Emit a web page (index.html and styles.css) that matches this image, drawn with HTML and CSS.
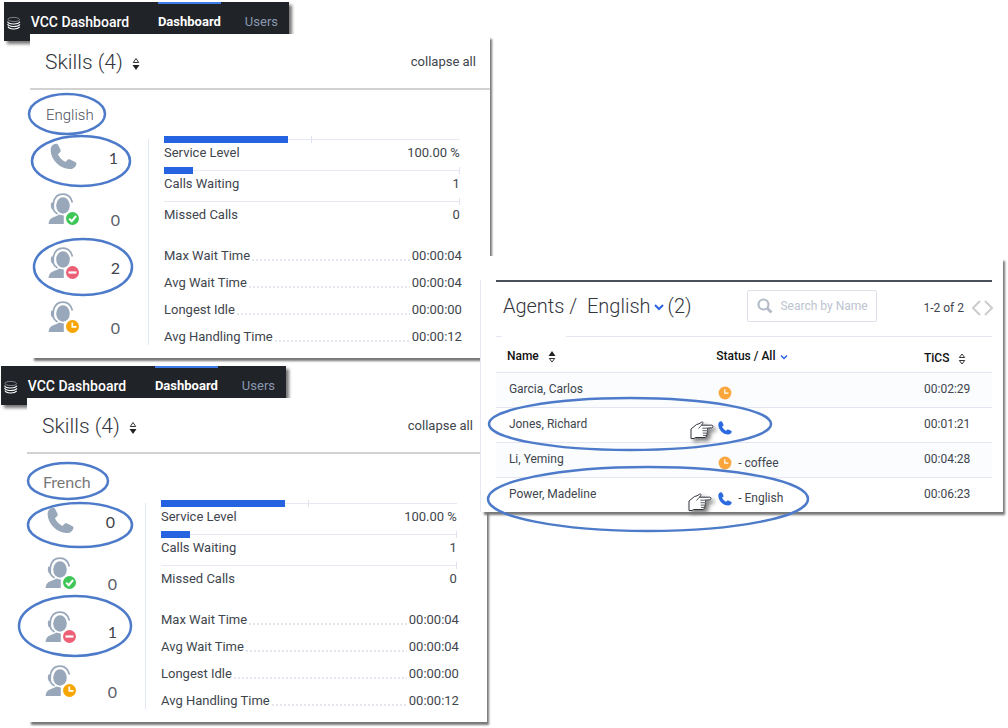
FILE: index.html
```
<!DOCTYPE html>
<html lang="en">
<head>
    <meta charset="utf-8">
    <title>VCC Dashboard</title>
    <link rel="stylesheet" href="styles.css">
</head>
<body>
    <!-- shared icons -->
    <svg class="defs" aria-hidden="true">
        <symbol id="logo" viewBox="0 0 14 14">
            <path d="M1 3.300C1 1.900 4 1.200 7 1.300c3.500.1 6 1.200 5.800 2.500C12.600 5 10 5.600 7 5.500 3.500 5.400 1 4.600 1 3.300z" fill="none" stroke="#aeb2b8" stroke-width=".7"/>
            <path d="M.6 5.500c.8 3 10 3.600 12.800.4M.6 8c.8 3.200 10 3.600 12.800.4M1 10.600c1.200 3.200 9.600 3.400 12 .4" fill="none" stroke="#fff" stroke-width="1.100"/>
        </symbol>
        <symbol id="phone" viewBox="0 0 27 27">
            <path d="M4 1.2C6 .2 7.400 .6 8.200 2l2.200 4.600c.6 1.400.2 2.400-.8 3.200l-1.700 1.500c1.500 3.300 4.200 6 7.600 7.700l1.600-1.800c.8-.9 1.800-1.100 3-.6l5 2.300c1.300.6 1.700 1.700 1.100 3-1.200 2.700-3.600 4.300-6.500 4.200C9.500 25.700 1 16.500.6 7.500.5 4.700 1.600 2.400 4 1.200z"/>
        </symbol>
        <symbol id="agent" viewBox="0 0 32 32">
            <g fill="#98a7b9">
                <ellipse cx="15" cy="12.500" rx="6.800" ry="8.300"/>
                <path d="M11 21.500c-1 1.200-2.500 1.700-4.500 2.300C3.500 24.800 1 26.500.6 31h15.200V22.500c-2-.2-3.500-.5-4.800-1z"/>
                <path d="M3.500 9.500h2.600v7H4.500C2.800 16 2.300 11 3.500 9.500z"/>
            </g>
            <path d="M5.400 10C6.500 4 10.500 1.200 15 1.200c4.500 0 8 2.500 9.400 8.300M5 15.500c1 3.500 2.500 4.500 4.500 5.500" fill="none" stroke="#98a7b9" stroke-width="1.700"/>
            <circle cx="24.500" cy="25.500" r="7.500" fill="#fff"/>
        </symbol>
        <symbol id="available" viewBox="0 0 32 32">
            <use href="#agent"/>
            <circle cx="24.500" cy="25.500" r="6.500" fill="#3ec657"/>
            <path d="M21.200 25.600l2.500 2.600 4.400-5.200" fill="none" stroke="#fff" stroke-width="2"/>
        </symbol>
        <symbol id="busy" viewBox="0 0 32 32">
            <use href="#agent"/>
            <circle cx="24.500" cy="25.500" r="6.500" fill="#ec5f75"/>
            <path d="M20.500 25.500h8" stroke="#fff" stroke-width="2.200"/>
        </symbol>
        <symbol id="away" viewBox="0 0 32 32">
            <use href="#agent"/>
            <circle cx="24.500" cy="25.500" r="6.500" fill="#f8a500"/>
            <path d="M24.300 21.500v4.300h4.200" fill="none" stroke="#fff" stroke-width="1.700"/>
        </symbol>
        <symbol id="clock" viewBox="0 0 14 14">
            <circle cx="7" cy="7" r="6.400" fill="#fba63c"/>
            <path d="M6.800 3.200v4h3.600" fill="none" stroke="#fff" stroke-width="1.200"/>
        </symbol>
        <symbol id="hand" viewBox="0 0 24 20">
            <path d="M1 8l5.500-4.500L9 2.800l2.800-1.700c1-.4 1.600.5 1 1.300L11.500 4.200h10.300c1.500 0 1.500 2.500 0 2.600l-5 .4c1 .5 1 1.900 0 2.400.9.6.8 2-.2 2.400.7.6.6 1.900-.4 2.300.4 1-.1 1.900-1.200 2.200H5.500L4 17.500H1z" fill="#fff" stroke="#30343e"/>
            <path d="M8.500 7.500L11.500 4.200M16.500 7.200h-4.200M16.500 9.700h-4M16.300 12.100h-3.600M16 14.400h-3" fill="none" stroke="#30343e" stroke-width=".8"/>
        </symbol>
        <symbol id="sort-down" viewBox="0 0 8 14">
            <path d="M1.300 5.500L4 1.500l2.700 4z" fill="none" stroke="#333"/>
            <path d="M.5 8h7L4 13z" fill="#222"/>
        </symbol>
        <symbol id="sort-up" viewBox="0 0 8 14">
            <path d="M.5 6L4 1l3.500 5z" fill="#222"/>
            <path d="M1.300 8.500h5.400L4 12z" fill="none" stroke="#333"/>
        </symbol>
        <symbol id="sort-none" viewBox="0 0 8 14">
            <path d="M1.300 5.500L4 2l2.700 3.500zM1.300 8.500h5.400L4 12z" fill="none" stroke="#333"/>
        </symbol>
        <symbol id="chevron" viewBox="0 0 10 8">
            <path d="M1 2l4 4 4-4" fill="none" stroke="#2c62e0" stroke-width="2"/>
        </symbol>
    </svg>

    <main class="page">
        <div class="boards">
            <section class="board">
                <nav class="topbar">
                    <svg class="logo"><use href="#logo"/></svg>
                    <span class="brand">VCC Dashboard</span>
                    <a class="tab current" href="#">Dashboard</a>
                    <a class="tab" href="#">Users</a>
                </nav>
                <div class="card">
                    <header class="card-head">
                        <h1>Skills (4)</h1>
                        <button class="sort" aria-label="Sort skills"><svg><use href="#sort-down"/></svg></button>
                        <button class="collapse">collapse all</button>
                    </header>
                    <h2 class="skill">English</h2>
                    <div class="detail">
                        <ul class="queue">
                            <li class="calls"><svg class="handset"><use href="#phone"/></svg><span>1</span></li>
                            <li><svg><use href="#available"/></svg><span>0</span></li>
                            <li class="raised"><svg><use href="#busy"/></svg><span>2</span></li>
                            <li><svg><use href="#away"/></svg><span>0</span></li>
                        </ul>
                        <div class="stats">
                            <div class="metric">
                                <div class="track mid"><div class="fill" style="width: 42%"></div></div>
                                <p><span>Service Level</span><span>100.00 %</span></p>
                            </div>
                            <div class="metric">
                                <div class="track"><div class="fill" style="width: 10%"></div></div>
                                <p><span>Calls Waiting</span><span>1</span></p>
                            </div>
                            <div class="metric">
                                <div class="track"></div>
                                <p><span>Missed Calls</span><span>0</span></p>
                            </div>
                            <dl class="times">
                                <div><dt>Max Wait Time</dt><dd>00:00:04</dd></div>
                                <div><dt>Avg Wait Time</dt><dd>00:00:04</dd></div>
                                <div><dt>Longest Idle</dt><dd>00:00:00</dd></div>
                                <div><dt>Avg Handling Time</dt><dd>00:00:12</dd></div>
                            </dl>
                        </div>
                    </div>
                    <svg class="marks">
                        <ellipse cx="37" cy="80" rx="38" ry="20"/>
                        <ellipse cx="51" cy="127" rx="49" ry="25"/>
                        <ellipse cx="53" cy="233" rx="49" ry="28"/>
                    </svg>
                </div>
            </section>

            <section class="board second">
                <nav class="topbar">
                    <svg class="logo"><use href="#logo"/></svg>
                    <span class="brand">VCC Dashboard</span>
                    <a class="tab current" href="#">Dashboard</a>
                    <a class="tab" href="#">Users</a>
                </nav>
                <div class="card">
                    <header class="card-head">
                        <h1>Skills (4)</h1>
                        <button class="sort" aria-label="Sort skills"><svg><use href="#sort-down"/></svg></button>
                        <button class="collapse">collapse all</button>
                    </header>
                    <h2 class="skill plain">French</h2>
                    <div class="detail">
                        <ul class="queue">
                            <li class="calls"><svg class="handset"><use href="#phone"/></svg><span>0</span></li>
                            <li><svg><use href="#available"/></svg><span>0</span></li>
                            <li class="raised"><svg><use href="#busy"/></svg><span>1</span></li>
                            <li><svg><use href="#away"/></svg><span>0</span></li>
                        </ul>
                        <div class="stats">
                            <div class="metric">
                                <div class="track mid"><div class="fill" style="width: 42%"></div></div>
                                <p><span>Service Level</span><span>100.00 %</span></p>
                            </div>
                            <div class="metric">
                                <div class="track"><div class="fill" style="width: 10%"></div></div>
                                <p><span>Calls Waiting</span><span>1</span></p>
                            </div>
                            <div class="metric">
                                <div class="track"></div>
                                <p><span>Missed Calls</span><span>0</span></p>
                            </div>
                            <dl class="times">
                                <div><dt>Max Wait Time</dt><dd>00:00:04</dd></div>
                                <div><dt>Avg Wait Time</dt><dd>00:00:04</dd></div>
                                <div><dt>Longest Idle</dt><dd>00:00:00</dd></div>
                                <div><dt>Avg Handling Time</dt><dd>00:00:12</dd></div>
                            </dl>
                        </div>
                    </div>
                    <svg class="marks">
                        <ellipse cx="41" cy="83" rx="40" ry="18"/>
                        <ellipse cx="53" cy="127" rx="52" ry="22"/>
                        <ellipse cx="48" cy="228" rx="56" ry="30"/>
                    </svg>
                </div>
            </section>
        </div>

        <section class="agents">
            <div class="agents-body">
                <header class="agents-head">
                    <h1>Agents /&nbsp; English</h1>
                    <button class="pick" aria-label="Choose skill"><svg><use href="#chevron"/></svg></button>
                    <h1>(2)</h1>
                    <label class="search">
                        <svg viewBox="0 0 16 16"><circle cx="6.500" cy="6.500" r="5" fill="none" stroke="#b4bcc8" stroke-width="2.200"/><path d="M10.300 10.300l4.200 4.200" stroke="#b4bcc8" stroke-width="3"/></svg>
                        <input type="text" placeholder="Search by Name" aria-label="Search by Name">
                    </label>
                    <span class="range">1-2 of 2</span>
                    <button class="pager" aria-label="Previous page"><svg viewBox="0 0 10 16"><path d="M9 1L2 8l7 7"/></svg></button>
                    <button class="pager" aria-label="Next page"><svg viewBox="0 0 10 16"><path d="M1 1l7 7-7 7"/></svg></button>
                </header>
                <table>
                    <thead>
                        <tr>
                            <th class="name">Name <svg class="arrows"><use href="#sort-up"/></svg></th>
                            <th class="status">Status / All <svg class="small"><use href="#chevron"/></svg></th>
                            <th class="tics">TiCS <svg class="arrows"><use href="#sort-none"/></svg></th>
                        </tr>
                    </thead>
                    <tbody>
                        <tr><td>Garcia, Carlos</td><td class="state"><svg><use href="#clock"/></svg></td><td>00:02:29</td></tr>
                        <tr><td>Jones, Richard</td><td class="state"><svg><use href="#phone"/></svg></td><td>00:01:21</td></tr>
                        <tr><td>Li, Yeming</td><td class="state"><svg><use href="#clock"/></svg> - coffee</td><td>00:04:28</td></tr>
                        <tr><td>Power, Madeline</td><td class="state"><svg><use href="#phone"/></svg> - English</td><td>00:06:23</td></tr>
                    </tbody>
                </table>
            </div>
            <svg class="marks">
                <ellipse cx="150" cy="168" rx="141" ry="26"/>
                <ellipse cx="168" cy="243" rx="160" ry="32"/>
                <use class="hand" href="#hand" x="210" y="165" width="24" height="20"/>
                <use class="hand" href="#hand" x="208" y="237" width="24" height="20"/>
            </svg>
        </section>
    </main>
</body>
</html>
```
FILE: styles.css
```
* {
    box-sizing: border-box;
}
body {
    margin: 0;
    background: #fff;
    color: #40454d;
    font: 13px/20px Roboto, "Liberation Sans", sans-serif;
}
h1, h2, p, ul, dl, dd {
    margin: 0;
    padding: 0;
    font-weight: 300;
}
button {
    padding: 0;
    border: 0;
    background: none;
    font: inherit;
    color: inherit;
}
svg {
    display: block;
}
.defs {
    position: absolute;
    width: 0;
    height: 0;
}
.page {
    display: grid;
    grid-template-columns: minmax(0, 49fr) minmax(0, 51fr);
    align-items: start;
    padding-bottom: 5px;
}

/* skill boards */
.board {
    padding: 2px 4px 0;
}
.second {
    padding: 8px 7px 0 1px;
}
.topbar {
    display: flex;
    width: 285px;
    height: 39px;
    background: #202328;
    box-shadow: 3px 3px 3px #777;
    color: #fff;
    line-height: 40px;
}
.logo {
    width: 14px;
    height: 14px;
    margin: 14px 10px 0 3px;
}
.brand {
    width: 130px;
    font-size: 14px;
    font-weight: 500;
}
.tab {
    height: 32px;
    margin-right: 24px;
    color: #8a99b0;
    text-decoration: none;
}
.current {
    margin-left: auto;
    border-top: 2px solid #3c7be8;
    color: #fff;
    font-weight: 700;
    line-height: 36px;
}
.tab:last-child {
    margin-right: 11px;
}
.card {
    position: relative;
    height: 324px;
    margin: -7px 0 0 26px;
    background: #fff;
    box-shadow: 3px 4px 2px -1px #777;
}
.card-head {
    display: flex;
    align-items: center;
    height: 56px;
    padding: 2px 14px 0 15px;
    border-bottom: 2px solid #d2d2d2;
}
h1 {
    color: #33363c;
    font-size: 21px;
    line-height: 28px;
}
.sort {
    margin: 4px auto 0 9px;
}
.sort svg, .arrows {
    width: 8px;
    height: 14px;
}
.skill {
    padding: 15px 16px 0;
    height: 46px;
    color: #4a4f5a;
    font-size: 15px;
}
.plain {
    padding-top: 18px;
    color: #777;
    font-family: Lato, sans-serif;
    font-size: 16px;
    font-weight: 400;
}
.detail {
    display: flex;
}
.queue {
    width: 119px;
    height: 206px;
    margin-top: 3px;
    padding-left: 18px;
    border-right: 1px solid #dfe7f0;
    list-style: none;
}
.queue li {
    display: flex;
    align-items: flex-end;
    justify-content: space-between;
    height: 54px;
    padding-right: 28px;
    color: #5c6068;
    font: 16px/22px Lato, sans-serif;
}
.queue svg {
    width: 32px;
    height: 32px;
    margin-bottom: 6px;
}
.queue .calls {
    height: 38px;
    padding-right: 30px;
    align-items: center;
}
.queue .handset {
    width: 27px;
    height: 27px;
    margin: 0 0 4px 2px;
    fill: #98a7b9;
}
.queue .calls, .queue .raised {
    color: #3f444c;
}
.queue .raised span {
    margin-bottom: 6px;
}
.stats {
    flex: 1;
    padding: 0 28px 0 15px;
}
.metric {
    margin-right: 2px;
}
.metric p {
    display: flex;
    justify-content: space-between;
    height: 24px;
    font-weight: 400;
}
.track {
    height: 7px;
    border-right: 1px solid #dfe3f0;
    background: linear-gradient(#e6e9f4, #e6e9f4) 0 3px / 100% 1px no-repeat;
}
.mid {
    border-right: 0;
    background: linear-gradient(#e6e9f4, #e6e9f4) 0 3px / 100% 1px no-repeat, linear-gradient(#dfe3f0, #dfe3f0) 50% 0 / 1px 7px no-repeat;
}
.fill {
    height: 7px;
    background: #2563e0;
}
.times {
    margin-top: 14px;
}
.times div {
    display: flex;
    height: 27px;
    line-height: 26px;
}
.times dt {
    display: flex;
    flex: 1;
    font-weight: 400;
}
.times dt::after {
    content: "";
    flex: 1;
    height: 2px;
    margin: 16px 2px 0;
    background: repeating-linear-gradient(90deg, #e2e6ef 0 2px, transparent 2px 4px);
}
.times dd {
    font-weight: 400;
}

/* hand drawn rings */
.marks {
    position: absolute;
    top: 0;
    left: 0;
    overflow: visible;
    pointer-events: none;
}
.marks ellipse {
    fill: none;
    stroke: #4d7bca;
    stroke-width: 2.5px;
}
.hand {
    filter: drop-shadow(3px 3px 2px #777);
}

/* agents table */
.agents {
    position: relative;
    margin: 256px 5px 0 -14px;
    padding: 24px 11px 0 16px;
    background: linear-gradient(#e6e8f4, #e6e8f4) 0 24px / 1px 100% no-repeat #fff;
    box-shadow: 3px 4px 2px -1px #777;
    font-size: 12px;
}
.agents-body {
    border-top: 2px solid #4b4e5b;
}
.agents-head {
    display: flex;
    align-items: center;
    height: 55px;
    padding: 0 0 7px 7px;
    background: linear-gradient(90deg, #e4e7f2 6px, #fff 6px 70px, #e4e7f2 70px) 0 100% / 100% 1px no-repeat;
}
.agents-head h1 {
    font-size: 20px;
}
.pick {
    margin: 2px 4px 0 3px;
}
.pick svg {
    width: 10px;
    height: 8px;
}
.search {
    display: flex;
    align-items: center;
    width: 130px;
    height: 32px;
    margin: 0 46px 0 auto;
    padding-left: 9px;
    border: 1px solid #dde1ea;
    border-radius: 2px;
}
.search svg {
    flex: none;
    width: 16px;
    height: 16px;
}
.search input {
    width: 102px;
    padding: 0 0 0 7px;
    border: 0;
    outline: 0;
    background: none;
    font: inherit;
}
.search input::placeholder {
    color: #bcc4d0;
}
.range {
    margin: 4px 7px 0 0;
}
.pager {
    margin: 4px -2px 0 0;
}
.pager + .pager {
    margin-left: 5px;
}
.pager svg {
    width: 10px;
    height: 16px;
    fill: none;
    stroke: #ccc;
    stroke-width: 2px;
}
table {
    width: 100%;
    border-collapse: collapse;
    table-layout: fixed;
}
th {
    height: 35px;
    padding: 4px 0 0 11px;
    color: #111;
    font-weight: 500;
    text-align: left;
}
th svg {
    display: inline-block;
    margin-left: 6px;
    vertical-align: middle;
}
.small {
    width: 8px;
    height: 6px;
    margin-left: 2px;
}
.name {
    width: 44%;
}
.status {
    padding-left: 2px;
}
.tics {
    width: 68px;
    padding: 8px 0 0;
}
td {
    height: 35px;
    padding: 0 0 2px 13px;
    border-top: 1px solid #e4e7f2;
}
tbody tr:nth-child(odd) {
    background: #fafcfe;
}
td:last-child {
    padding-left: 0;
}
td.state {
    padding: 6px 0 0 4px;
}
.state svg {
    display: inline-block;
    width: 14px;
    height: 14px;
    margin-right: 3px;
    vertical-align: middle;
    fill: #2c6ae0;
}
```
